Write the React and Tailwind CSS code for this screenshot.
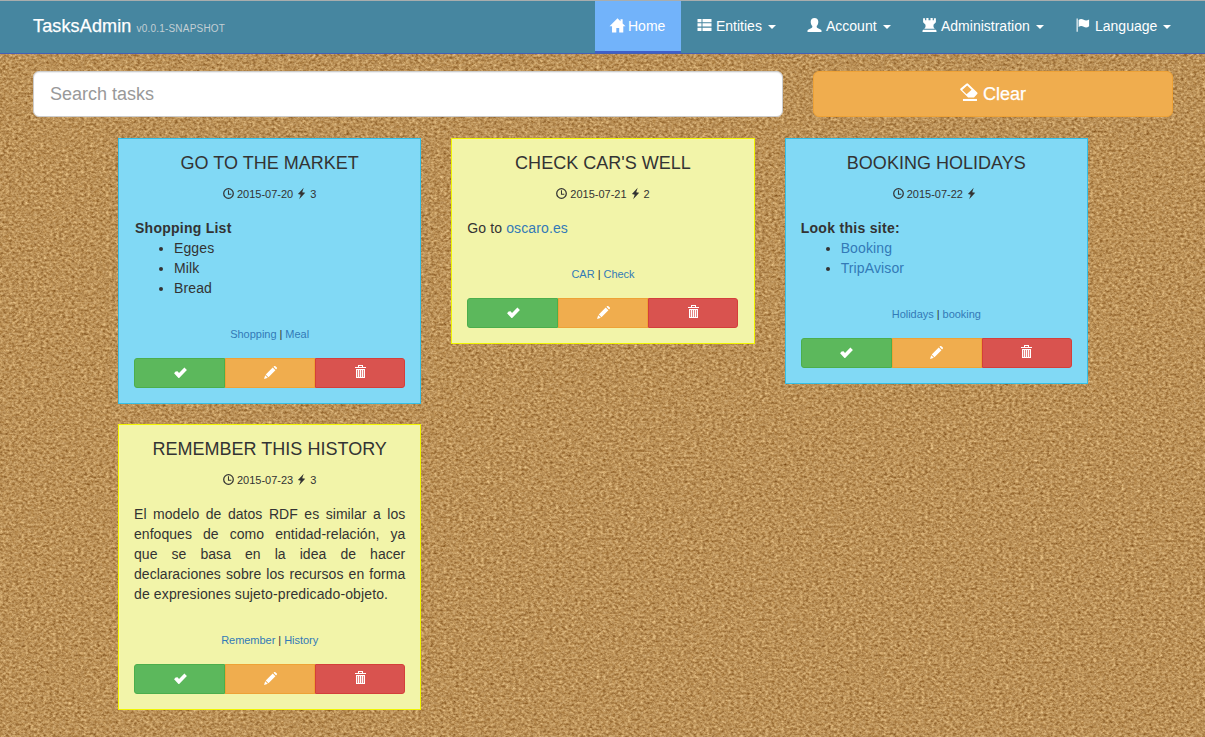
import React from "react";

const FONT = "font-['Liberation_Sans',Arial,sans-serif]";

const SHAPES = {
  home: (
    <path d="M7 .3 9.800 3.100V1.200h2v3.900L14.500 7.800H12.400V13.500H8.600V9.400H5.900v4.100H1.900V7.800H-.400Z" />
  ),
  list: (
    <path d="M0 1h4v3.300H0zM5 1h9v3.300H5zM0 5.300h4v3.300H0zM5 5.300h9v3.300H5zM0 9.700h4V13H0zM5 9.700h9V13H5z" />
  ),
  user: (
    <path d="M7 0C9.400 0 10.800 1.500 10.800 3.700c0 1.900-.6 3.200-1.600 4.300v1c0 .5.300.8.8 1l3 1.400c.7.300 1 .7 1 1.300V14H0v-1.300c0-.6.300-1 1-1.300L4 10c.5-.2.8-.5.8-1V8C3.800 6.900 3.200 5.600 3.200 3.700 3.200 1.500 4.600 0 7 0Z" />
  ),
  tower: (
    <path d="M.6.3h2v1.900h1.200V.1h2.200v2.100h2V.1h2.200v2.100h1.200V.3h2v3.900L11 6.800v2.300l1.200 1.700H1.800L3 9.100V6.800L.6 4.200ZM.6 11.700h12.800l.6 1.100V14H0v-1.200Z" />
  ),
  flag: (
    <path d="M.1.600h1.100V13.800H.1ZM2.100 2C3.800.6 5.500.8 7.200 1.800s3.400 1 5.400-.4v6.900c-1.900 1.500-3.700 1.500-5.400.5S3.800 7.700 2.100 9Z" />
  ),
  eraser: (
    <>
      <path
        fillRule="evenodd"
        d="M4.900.6Q5.600-.1 6.300.6L13.400 7.300Q14 7.900 13.400 8.500L10.900 11.200H6.300L.4 5.500Q-.2 4.900.4 4.300ZM5.600 1.900 1.700 5.500 5.100 8.800 9 5.200Z"
      />
      <path d="M2.300 12.400h10.900V14H2.300Z" />
    </>
  ),
  clock: (
    <>
      <circle cx="7" cy="7" r="6.100" fill="none" stroke="currentColor" strokeWidth="1.600" />
      <path d="M6.300 3h1.300v4.200h3v1.300H6.300Z" />
    </>
  ),
  flash: <path d="M9.800-.3 2.500 7.600l3.500.900L4 14.300l7.700-8.200-3.800-.8Z" />,
  ok: <path d="M1.700 6 .1 7.900l4.700 5 .8 0 8.300-8.700-2.700-2.700L5.400 7.600 3.800 5.700Z" />,
  pencil: (
    <path d="m10.200.900 1-.8q.6-.4 1.100.1l1.500 1.500q.5.500.1 1.100L13 3.800ZM9.400 1.700l2.900 2.900-7.500 7.500L1.900 9.200ZM1.300 9.900l2.800 2.800L0 14Z" />
  ),
};

function Icon({ name, className }) {
  return (
    <svg viewBox="0 0 14 14" fill="currentColor" overflow="visible" className={`shrink-0 ${className}`}>
      {SHAPES[name]}
    </svg>
  );
}

function TrashIcon() {
  return (
    <svg viewBox="0 0 11 14" fill="currentColor" shapeRendering="crispEdges" className="mb-0.5 h-[14px] w-[11px] shrink-0">
      <path d="M3 0h5v1H3ZM3 1h1v1H3ZM7 1h1v1H7ZM0 2h11v1H0ZM1 4h9v1H1ZM1 5h1v8H1ZM9 5h1v8H9ZM1 12h9v1H1ZM3 5h1v7H3ZM5 5h1v7H5ZM7 5h1v7H7Z" />
      <path d="M2 5h7v7H2Z" opacity=".3" />
    </svg>
  );
}

function CorkTexture() {
  return (
    <svg className="pointer-events-none absolute inset-0 h-full w-full" aria-hidden="true">
      <filter id="cork" x="0" y="0" width="100%" height="100%" colorInterpolationFilters="sRGB">
        <feTurbulence type="fractalNoise" baseFrequency="0.32 0.42" numOctaves="3" seed="7" />
        <feColorMatrix values="0.44 0.2 0 0 0.41  0.5 0.2 0 0 0.215  0.5 0.16 0 0 0.01  0 0 0 0 1" />
      </filter>
      <rect width="100%" height="100%" filter="url(#cork)" />
    </svg>
  );
}

const NAV = [
  { icon: "list", label: "Entities", width: "w-[110px]" },
  { icon: "user", label: "Account", width: "w-[115px]" },
  { icon: "tower", label: "Administration", width: "w-[154px]" },
  { icon: "flag", label: "Language", width: "w-[98px]" },
];

function Navbar() {
  return (
    <nav className="relative flex h-[54px] items-start justify-between border-t border-b border-t-[#a9adad] border-b-[#4560b4] bg-[#4686a0] pl-[33px] pr-[30px] text-white">
      <a className="flex items-baseline pt-[11px] leading-7">
        <span className="text-[18px] tracking-[0.15px] [-webkit-text-stroke:0.25px_white]">TasksAdmin</span>
        <span className="ml-[5px] text-[10px] tracking-[0.2px] text-[#c3cfd4]">v0.0.1-SNAPSHOT</span>
      </a>
      <ul className="flex text-sm">
        <li className="mr-[17px] flex h-[52px] w-[86px] items-center border-b-2 border-[#4060c8] bg-[#72b3fa] pl-[15px]">
          <Icon name="home" className="mr-[3px] -mt-px h-[15px] w-[15px]" />
          Home
        </li>
        {NAV.map((n) => (
          <li key={n.label} className={`flex h-[50px] items-center ${n.width}`}>
            <Icon name={n.icon} className="mr-1 -mt-0.5 -ml-px h-[14px] w-[15px]" />
            <span>{n.label}</span>
            <span className="ml-1.5 mt-px border-x-4 border-t-4 border-x-transparent border-t-white" />
          </li>
        ))}
      </ul>
    </nav>
  );
}

const THEMES = {
  blue: "border-[#35bfe6] bg-[#81d9f5]",
  yellow: "border-[#f0f500] bg-[#f2f4a9]",
};

function Card({ theme, title, date, effort, tags, children }) {
  return (
    <article className={`border p-[15px] text-sm leading-5 text-[#333] ${THEMES[theme]}`}>
      <h4 className="-mt-px mb-px text-center text-[18px] leading-5 tracking-[0.02px]">{title}</h4>
      <div className="mt-[11px] flex h-5 items-center justify-center text-[11px]">
        <Icon name="clock" className="mr-[3px] -mt-px h-[11px] w-[11px]" />
        <span>{date}</span>
        <Icon name="flash" className="ml-[3px] mr-[3px] -mt-0.5 h-[11px] w-[11px]" />
        {effort && <span>{effort}</span>}
      </div>
      <div className="mt-[14px] tracking-[0.12px]">{children}</div>
      <div className="mt-[26px] text-center text-[11px] leading-5 tracking-[-0.03px] text-[#337ab7]">
        {tags[0]} <span className="text-[#333]">|</span> {tags[1]}
      </div>
      <div className="mt-[14px] grid h-[30px] grid-cols-[91px_90px_90px] text-white">
        <button className="flex items-center justify-center rounded-l-[3px] border border-[#4cae4c] bg-[#5cb85c]">
          <Icon name="ok" className="mb-0.5 ml-px h-[13px] w-[13px]" />
        </button>
        <button className="flex items-center justify-center border border-[#eea236] bg-[#f0ad4e]">
          <Icon name="pencil" className="mb-0.5 h-[13px] w-[13px]" />
        </button>
        <button className="flex items-center justify-center rounded-r-[3px] border border-[#d43f3a] bg-[#d9534f]">
          <TrashIcon />
        </button>
      </div>
    </article>
  );
}

const HISTORY_LINES = [
  "El modelo de datos RDF es similar a los",
  "enfoques de como entidad-relación, ya",
  "que se basa en la idea de hacer",
  "declaraciones sobre los recursos en forma",
];

export default function App() {
  return (
    <div className={`relative h-[737px] w-[1205px] overflow-hidden bg-[#bd9258] ${FONT}`}>
      <CorkTexture />
      <Navbar />
      <div className="relative mt-[17px] flex gap-[30px] pl-[33px] pr-8">
        <input
          placeholder="Search tasks"
          className="h-[46px] w-[750px] rounded-md border border-[#ccc] bg-white px-4 text-[18px] shadow-[inset_0_1px_1px_rgba(0,0,0,0.075)] placeholder:text-[#999]"
        />
        <button className="flex h-[46px] flex-1 items-center justify-center rounded-md border border-[#eea236] bg-[#f0ad4e] text-[18px] text-white">
          <Icon name="eraser" className="mr-[5px] -mt-1 h-[18px] w-[18px]" />
          <span className="[-webkit-text-stroke:0.25px_white]">Clear</span>
        </button>
      </div>
      <main className="relative ml-[118px] mt-[21px] grid w-[970px] grid-cols-3 items-start gap-x-[30px] gap-y-5">
        <Card theme="blue" title="GO TO THE MARKET" date="2015-07-20" effort="3" tags={["Shopping", "Meal"]}>
          <b className="ml-px tracking-[0.25px]">Shopping List</b>
          <ul className="list-disc pl-10">
            <li>Egges</li>
            <li>Milk</li>
            <li>Bread</li>
          </ul>
        </Card>
        <Card theme="yellow" title="CHECK CAR'S WELL" date="2015-07-21" effort="2" tags={["CAR", "Check"]}>
          Go to <a className="text-[#337ab7]">oscaro.es</a>
        </Card>
        <Card theme="blue" title="BOOKING HOLIDAYS" date="2015-07-22" tags={["Holidays", "booking"]}>
          <b className="tracking-[0.3px]">Look this site:</b>
          <ul className="list-disc pl-10">
            <li><a className="text-[#337ab7]">Booking</a></li>
            <li><a className="text-[#337ab7]">TripAvisor</a></li>
          </ul>
        </Card>
        <Card theme="yellow" title="REMEMBER THIS HISTORY" date="2015-07-23" effort="3" tags={["Remember", "History"]}>
          <p className="tracking-[0.04px]">
            {HISTORY_LINES.map((line) => (
              <span key={line} className="block text-justify [text-align-last:justify]">{line} </span>
            ))}
            <span className="block tracking-[0.13px]">de expresiones sujeto-predicado-objeto.</span>
          </p>
        </Card>
      </main>
    </div>
  );
}
